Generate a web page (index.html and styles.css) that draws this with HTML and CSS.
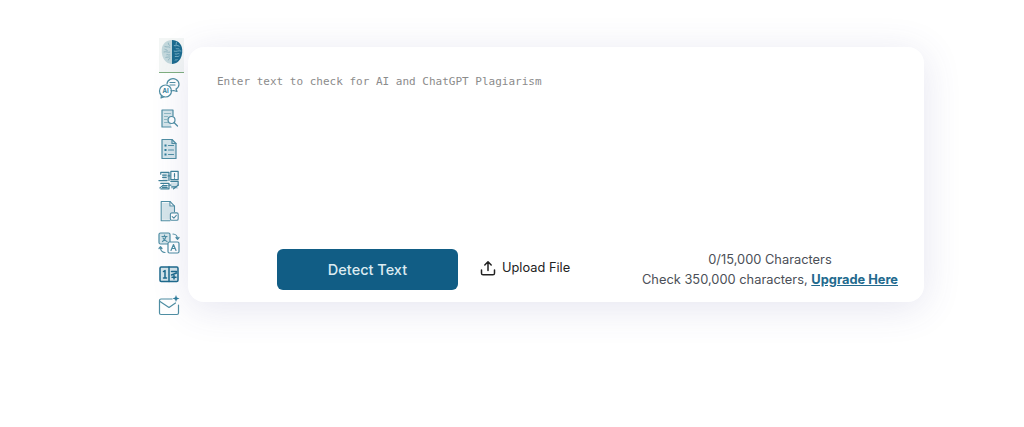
FILE: index.html
```html
<!DOCTYPE html>
<html lang="en">
<head>
<meta charset="utf-8">
<title>AI Detector</title>
<link rel="stylesheet" href="styles.css">
</head>
<body>
<main class="app">
  <nav class="rail">
    <div class="rail-active">
      <svg class="brain" viewBox="0 0 24 28" width="24" height="26">
        <path d="M12 1C6 1 1.500 5 1 11c-.5 5 1 10 4 13 2 2 4.500 3 7 3z" fill="#c3d8dc"/>
        <path d="M12 1c6 0 10.500 4 11 10 .5 5-1 10-4 13-2 2-4.500 3-7 3z" fill="#1b6b8e"/>
        <path d="M4 8c2 1 4 0 6 1M3 14c3-1 5 1 7 0M5 20c2-1 4 0 5-1M8 4c0 2 1 3 2 3M4 11c1 1 3 0 3 2M6 17c1-1 2 1 4 0M8 23c0-1 1-2 2-2" fill="none" stroke="#8fb4bf" stroke-width="1"/>
        <path d="M14 7c2 1 4-1 6 1M14 13c3 1 5-1 8 0M15 19c2-1 3 1 5-1M17 3c-1 2 0 3-1 4M16 10c1 1 3 0 4 1M15 16c2 1 4-1 5 0M15 23c1-1 2 0 3-1" fill="none" stroke="#7fb6c9" stroke-width="1"/>
      </svg>
    </div>
    <svg class="icon icon-first" viewBox="0 0 22 22"><circle cx="7.500" cy="14" r="6" /><path d="M3.500 18.500 3 21l3-1.200"/><path d="M9 7a6 5.500 0 1 1 9 5l1 2.500-3.500-1a6 5.500 0 0 1-2.500.2"/><path d="M12 5.500h5M12 8h5"/><text x="7.500" y="16" class="mini">AI</text></svg>
    <svg class="icon" viewBox="0 1 22 22"><path d="M4 3h11v6l-3 1-1 4 2 2v4H4z" class="fill-soft"/><path d="M15 9V3H4v17h9"/><path d="M6.500 6.500h6M6.500 9.500h3M6.500 12.500h2M6.500 15.500h3" class="soft"/><circle cx="13.500" cy="13" r="3.500"/><path d="m16 15.500 3.500 3.500"/></svg>
    <svg class="icon" viewBox="0 1 22 22"><path d="M4 1.500h10l4 4v15H4z" class="fill-soft"/><path d="M4 1.500h10l4 4v15H4z"/><path d="M14 1.500v4h4"/><path d="M6.500 6.500h2v2h-2zM6.500 11h2v2h-2zM6.500 15.500h2v2h-2z" class="fill"/><path d="M10.500 7.500h5M10.500 12h5M10.500 16.500h5"/></svg>
    <svg class="icon icon-dense" viewBox="0 1.500 24 22"><path d="M5 3h7v9H5z" class="fill-soft"/><path d="M14 14h8v7h-8z" class="fill-soft"/><path d="M3 5V3h9v9M14 2h8v9h-8zM18 4.500v3M18 9v.5"/><path d="M1 12h9M3 15h9v6H3M14 13h8v4"/><path d="M2 20 6 17M17 21l5-4M13 7h-2M12 17h2"/><path d="M5 6h4M5 8.500h4M15 19h5M5 17.500h5M5 19.500h5"/></svg>
    <svg class="icon" viewBox="0 1 22 24"><path d="M3.500 3h8v4h5v6h-4v8.500h-9z" class="fill-soft"/><path d="M12 22.500H2.500V1.500H12l5 5v6"/><path d="M12 1.500v5h5"/><rect x="12.500" y="14" width="8.500" height="8" rx="1.500"/><path d="m14.500 18 1.800 1.700 2.700-3"/></svg>
    <svg class="icon" viewBox="0 0 22 22"><rect x="1" y="1" width="11" height="11" rx="1.500" class="fill-soft"/><rect x="1" y="1" width="11" height="11" rx="1.500"/><rect x="10" y="10" width="11" height="11" rx="1.500" class="paper"/><path d="M4 4.500h5M6.500 3v1.500M4.500 9.500c2-1 3-3 3.500-5M5 6c1 1.500 2 2.500 4 3.500"/><path d="m13 18.500 2.500-6 2.500 6M14 16.500h3"/><path d="M15 2c2.500 0 4.500 2 4.500 5M18 5.500l1.500 1.800 1.500-1.800M7 20.500c-2.500 0-4.500-2-4.500-5M1 16.500l1.500-1.800 1.500 1.800"/></svg>
    <svg class="icon icon-strong" viewBox="0 0 22 22"><rect x="2" y="4" width="18" height="14.500" rx="1.200" class="fill-soft"/><rect x="2" y="4" width="18" height="14.500" rx="1.200"/><path d="M11 4v14.500"/><path d="M5.500 8.500 7 7.500v7.500M5.500 15h3M13.500 8.500h5M13.500 12l5-2M16 12.500v3.500M14 14.200h4"/></svg>
    <svg class="icon" viewBox="0 0 22 22"><path d="M14 5H3a1.500 1.500 0 0 0-1.500 1.500V19A1.500 1.500 0 0 0 3 20.500h16a1.500 1.500 0 0 0 1.500-1.500v-8"/><path d="m2 7.500 9 6 6.500-4.500"/><path d="M18 1l.9 2.600 2.600.9-2.600.9L18 8l-.9-2.600-2.600-.9 2.600-.9z" class="fill"/></svg>
  </nav>
  <section class="card">
    <div class="prompt">Enter text to check for AI and ChatGPT Plagiarism</div>
    <div class="actions">
      <button class="detect" type="button">Detect Text</button>
      <div class="upload">
        <svg viewBox="0 0 18 18" width="18" height="18"><path d="M9 11.500V3M5.800 6 9 2.800 12.200 6M2.500 11v3.200c0 .9.700 1.600 1.600 1.600h9.800c.9 0 1.600-.7 1.600-1.600V11"/></svg>
        <span>Upload File</span>
      </div>
      <div class="count">
        <p>0/15,000 Characters</p>
        <p>Check 350,000 characters, <a href="#">Upgrade Here</a></p>
      </div>
    </div>
  </section>
</main>
</body>
</html>
```
FILE: styles.css
```css
* { box-sizing: border-box; }
html, body { margin: 0; height: 100%; background: #fff; overflow: hidden; }
body { font-family: Inter, "Liberation Sans", sans-serif; }
.app { display: flex; align-items: flex-start; gap: 4px; padding: 38px 0 0 159px; }
.rail { width: 25px; display: flex; flex-direction: column; align-items: center; }
.rail-active {
  width: 25px; height: 35px; background: #f3f6f5;
  border-bottom: 1px solid #7fae7f; display: flex; justify-content: center; padding-top: 1px;
}
.brain { display: block; }
.icon {
  width: 22px; height: 22px; margin: 9px 5px 0 0; flex: none; overflow: visible;
  fill: none; stroke: #4f8ea3; stroke-width: 1.200; stroke-linecap: round; stroke-linejoin: round;
}
.icon-first { margin-top: 4px; }
.icon .soft { stroke: #8db8c4; }
.icon .fill { fill: #2e7d9b; stroke: none; }
.icon .fill-soft { fill: #d5e5ea; stroke: none; }
.icon .paper { fill: #fff; }
.icon .mini { font: 700 6px Inter, sans-serif; fill: #2e7d9b; stroke: none; text-anchor: middle; }
.icon-dense { stroke: #3f8299; stroke-width: 1.300; }
.icon-strong { stroke: #1d6a8c; stroke-width: 1.500; }
.card {
  width: 736px; height: 255px; margin-top: 9px; background: #fff; border-radius: 16px;
  box-shadow: 0 6px 38px rgba(70, 70, 150, .14);
  display: flex; flex-direction: column; justify-content: space-between; padding: 28px 26px 12px 29px;
}
.prompt { font: 11px/13px "DejaVu Sans Mono", monospace; color: #8b8b8b; }
.actions { display: flex; align-items: flex-start; padding-left: 60px; }
.detect {
  width: 181px; height: 41px; border: 0; border-radius: 6px; background: #115d85; color: #dcebf1;
  font: 500 14.500px Inter, sans-serif; margin-right: 22px;
}
.upload { display: flex; align-items: center; gap: 5px; height: 37px; margin-left: -1px; font-size: 12.800px; font-weight: 400; color: #222; }
.upload svg { fill: none; stroke: #222; stroke-width: 1.500; stroke-linecap: round; stroke-linejoin: round; }
.count { margin-left: auto; padding-top: 1px; text-align: center; font-size: 12.850px; line-height: 20px; color: #4b4f57; }
.count p { margin: 0; }
.count a { color: #226a8e; font-weight: 700; }
```
